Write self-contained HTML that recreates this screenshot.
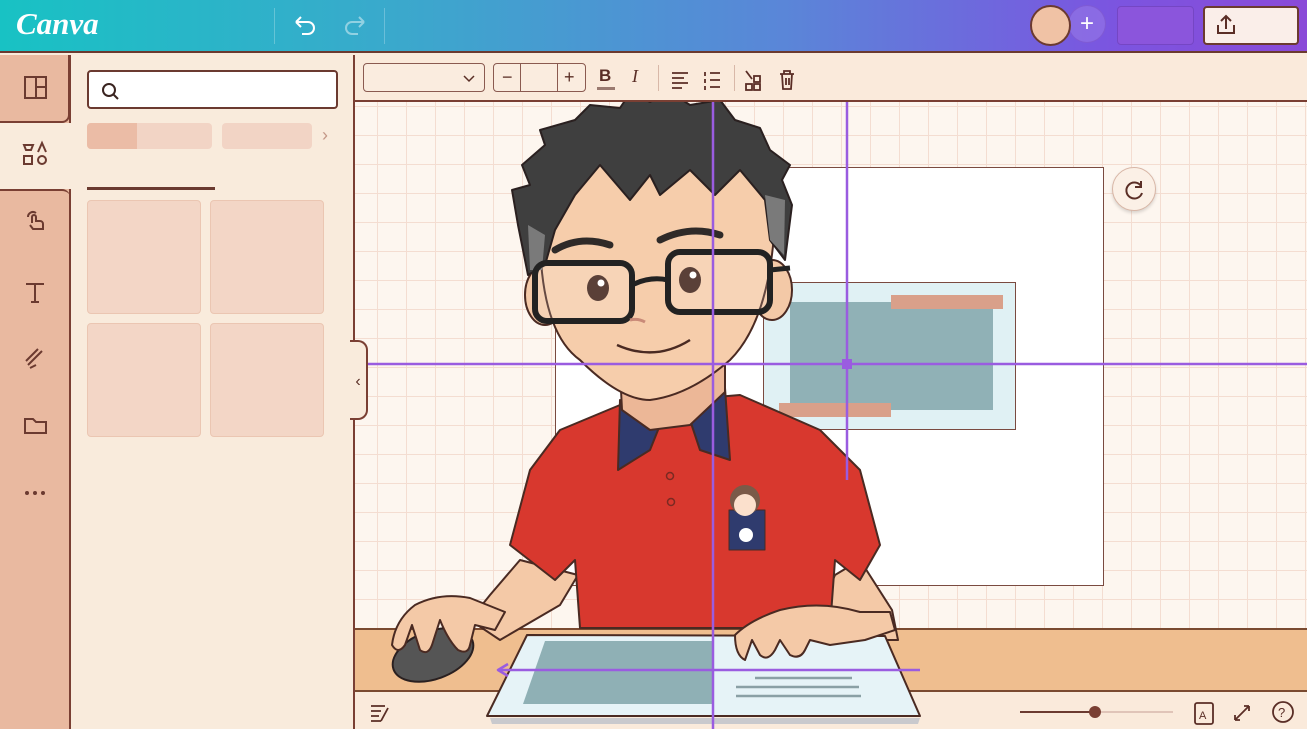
<!DOCTYPE html>
<html><head><meta charset="utf-8"><style>
*{margin:0;padding:0;box-sizing:border-box}
html,body{width:1307px;height:729px;overflow:hidden}
body{font-family:"Liberation Sans",sans-serif;background:#f9ebdc;position:relative}
.top{position:absolute;left:0;top:0;width:1307px;height:53px;background:linear-gradient(90deg,#18c2c4 0%,#3aa9cc 30%,#5a86d8 60%,#7b55e0 85%,#8a4ad8 100%);border-bottom:2px solid #6b3a30}
.logo{position:absolute;left:16px;top:6px;font-family:"Liberation Serif",serif;font-style:italic;font-weight:bold;font-size:31px;color:#fff}
.sep{position:absolute;top:8px;width:1px;height:36px;background:rgba(255,255,255,.25)}
.side{position:absolute;left:0;top:55px;width:71px;height:674px;background:#e9b9a0;border-right:2px solid #7a3f33}
.panel{position:absolute;left:71px;top:55px;width:284px;height:674px;background:#f9ebdc;border-right:2px solid #7a3f33}
.tile{position:absolute;width:114px;height:114px;background:#f3d6c6;border:1.5px solid #ebc6b2;border-radius:4px}
.tb{position:absolute;left:355px;top:55px;width:952px;height:47px;background:#faeadb;border-bottom:2px solid #7a3f33}
.box{position:absolute;border:1.5px solid #8a5a50;border-radius:4px;background:#faecdf}
</style></head><body>
<div class="top">
 <div class="logo">Canva</div>
 <div class="sep" style="left:274px"></div><div class="sep" style="left:384px"></div>
 <svg style="position:absolute;left:290px;top:12px" width="80" height="28"><path d="M6 10h12a6 6 0 0 1 0 12h-6M6 10l5-5M6 10l5 5" stroke="#fff" stroke-width="2" fill="none"/><path d="M74 10H62a6 6 0 0 0 0 12h6M74 10l-5-5M74 10l-5 5" stroke="rgba(255,255,255,.45)" stroke-width="2" fill="none"/></svg>
 <div style="position:absolute;left:1068px;top:5px;width:38px;height:38px;border-radius:50%;background:rgba(150,120,230,.6);border:1px solid rgba(120,80,200,.6);color:#fff;font-size:24px;text-align:center;line-height:36px">+</div>
 <div style="position:absolute;left:1030px;top:5px;width:41px;height:41px;border-radius:50%;background:#f0c2a5;border:2px solid #6b3a30"></div>
 <div style="position:absolute;left:1117px;top:6px;width:77px;height:39px;border-radius:4px;background:#8b55dc;border:1px solid #7546c4"></div>
 <div style="position:absolute;left:1203px;top:6px;width:96px;height:39px;border-radius:4px;background:#faeee9;border:2px solid #6b3a30"><svg width="30" height="30" style="position:absolute;left:8px;top:4px"><path d="M5 13v8h16v-8M13 17V4M8 9l5-5 5 5" stroke="#5a2e26" stroke-width="2" fill="none"/></svg></div>
</div>
<div class="side">
 <div style="position:absolute;left:0;top:0;width:70px;height:68px;background:#e9b9a0;border:2px solid #7a3f33;border-left:none;border-top:none;border-radius:0 0 8px 0"></div>
 <div style="position:absolute;left:0;top:68px;width:73px;height:66px;background:#f9ebdc"></div>
 <div style="position:absolute;left:0;top:134px;width:70px;height:560px;border-top:2px solid #7a3f33;border-radius:0 8px 0 0"></div>
 <svg width="70" height="674" style="position:absolute;left:0;top:0" fill="none" stroke="#6b3a30" stroke-width="2">
  <rect x="25" y="22" width="21" height="21"/><path d="M36 22v21M36 32h10"/>
  <path d="M24 90h9l-2 5h-5zM38 97l4-9 4 9M24 101h8v8h-8z"/><circle cx="42" cy="105" r="4"/>
  <path d="M28 162a5 5 0 0 1 8-4M32 168v-6a2 2 0 0 1 4 0v4h4a3 3 0 0 1 3 3v5h-10l-3-4"/>
  <path d="M26 229h18M35 229v18M31 247h8"/>
  <path d="M26 306l12-12M28 310l14-14M30 313l6-3"/>
  <path d="M25 364h8l3 3h10v11h-21z"/>
  <g fill="#6b3a30" stroke="none"><circle cx="27" cy="438" r="2"/><circle cx="35" cy="438" r="2"/><circle cx="43" cy="438" r="2"/></g>
 </svg>
</div>
<div class="panel">
 <div style="position:absolute;left:16px;top:15px;width:251px;height:39px;background:#fff;border:2px solid #6b3a30;border-radius:4px"><svg width="30" height="30" style="position:absolute;left:8px;top:5px"><circle cx="12" cy="13" r="6" stroke="#3a2420" stroke-width="2" fill="none"/><path d="M16 17l5 5" stroke="#3a2420" stroke-width="2"/></svg></div>
 <div style="position:absolute;left:16px;top:68px;width:125px;height:26px;border-radius:4px;background:#f2d4c5"><div style="width:50px;height:26px;background:#ebbca6;border-radius:4px 0 0 4px"></div></div>
 <div style="position:absolute;left:151px;top:68px;width:90px;height:26px;border-radius:4px;background:#f2d4c5"></div>
 <div style="position:absolute;left:251px;top:70px;color:#c49888;font-size:18px">›</div>
 <div style="position:absolute;left:16px;top:132px;width:128px;height:3px;background:#6b3a30"></div>
 <div class="tile" style="left:16px;top:145px"></div><div class="tile" style="left:139px;top:145px"></div>
 <div class="tile" style="left:16px;top:268px"></div><div class="tile" style="left:139px;top:268px"></div>
</div>
<!-- canvas -->
<div style="position:absolute;left:355px;top:102px;width:952px;height:526px;background-color:#fdf6ef;background-image:linear-gradient(#f4ddd1 1px,transparent 1px),linear-gradient(90deg,#f4ddd1 1px,transparent 1px);background-size:29px 29px;background-position:-7px 4px"></div>
<div style="position:absolute;left:555px;top:167px;width:549px;height:419px;background:#fff;border:1.5px solid #7a4a40"></div>
<div style="position:absolute;left:763px;top:282px;width:253px;height:148px;background:#e0f1f4;border:1.5px solid #7a4a40"></div>
<div style="position:absolute;left:790px;top:302px;width:203px;height:108px;background:#90b1b6"></div>
<div style="position:absolute;left:891px;top:295px;width:112px;height:14px;background:#d9a08a"></div>
<div style="position:absolute;left:779px;top:403px;width:112px;height:14px;background:#d9a08a"></div>
<div style="position:absolute;left:1112px;top:167px;width:44px;height:44px;border-radius:50%;background:#fbf0e6;border:1px solid #d8b6a6;box-shadow:0 2px 3px rgba(0,0,0,.15)"><svg width="44" height="44"><path d="M28 18a8 8 0 1 0 1 7M28 13v6h-6" stroke="#5a2e26" stroke-width="2" fill="none"/></svg></div>
<!-- desk -->
<div style="position:absolute;left:355px;top:628px;width:952px;height:64px;background:#efbe8f;border-top:2px solid #7a4a30;border-bottom:2px solid #7a4a30"></div>
<!-- bottom bar -->
<div style="position:absolute;left:355px;top:694px;width:952px;height:35px;background:#faeadb"></div>
<svg width="952" height="35" style="position:absolute;left:355px;top:694px" stroke="#5a2e26" stroke-width="1.8" fill="none">
 <path d="M16 12h14M16 17h10M16 22h8M16 27h10M33 14l-7 13"/>
 <path d="M665 18h75" stroke="#6b3a30" stroke-width="2"/><path d="M740 18h78" stroke="#e0c4b8" stroke-width="2"/>
 <circle cx="740" cy="18" r="6" fill="#7a3f33" stroke="none"/>
 <rect x="840" y="9" width="18" height="21" rx="2"/><text x="844" y="25" font-size="11" fill="#5a2e26" stroke="none" font-family="Liberation Sans">A</text>
 <path d="M880 26l14-14M880 26v-5M880 26h5M894 12h-5M894 12v5"/>
 <circle cx="928" cy="18" r="10"/><text x="923" y="23" font-size="13" fill="#5a2e26" stroke="none" font-family="Liberation Sans">?</text>
</svg>
<!-- character -->
<svg width="1307" height="729" style="position:absolute;left:0;top:0" stroke-linejoin="round">
 <!-- arms -->
 <path d="M520 560 L490 595 L470 620 L500 640 L560 605 L578 575Z" fill="#f4c9a7" stroke="#4a2a22" stroke-width="2"/>
 <path d="M860 560 L892 610 L898 640 L850 640 L820 610 L835 575Z" fill="#f4c9a7" stroke="#4a2a22" stroke-width="2"/>
 <!-- shirt -->
 <path d="M620 405 L560 430 L530 470 L510 545 L555 580 L575 560 L580 628 L830 628 L835 560 L860 580 L880 545 L860 470 L820 430 L740 395 Z" fill="#d8382e" stroke="#4a2a22" stroke-width="2"/>
 <path d="M620 400 L618 470 L650 450 L662 420Z M725 388 L730 460 L700 450 L690 420Z" fill="#2f3b6e" stroke="#4a2a22" stroke-width="2"/>
 <circle cx="670" cy="476" r="3.5" fill="none" stroke="#7a2a22" stroke-width="1.5"/><circle cx="671" cy="502" r="3.5" fill="none" stroke="#7a2a22" stroke-width="1.5"/>
 <rect x="729" y="510" width="36" height="40" fill="#2f3b6e" stroke="#4a2a22"/>
 <circle cx="745" cy="500" r="15" fill="#7a5a48"/><circle cx="745" cy="505" r="11" fill="#fbe0cc"/>
 <circle cx="746" cy="535" r="7" fill="#fff"/>
 <!-- neck -->
 <path d="M620 370 L622 410 L650 430 L690 425 L725 392 L725 360Z" fill="#ecb797" stroke="#4a2a22" stroke-width="2"/>
 <!-- ears -->
 <ellipse cx="545" cy="295" rx="20" ry="30" fill="#f4c9a7" stroke="#4a2a22" stroke-width="2"/>
 <ellipse cx="772" cy="290" rx="20" ry="30" fill="#f4c9a7" stroke="#4a2a22" stroke-width="2"/>
 <!-- face -->
 <path d="M540 220 Q538 330 580 360 Q620 400 650 400 Q690 395 730 360 Q770 320 775 220 Q770 150 660 150 Q545 150 540 220Z" fill="#f6cdab" stroke="#4a2a22" stroke-width="2"/>
 <!-- hair -->
 <path d="M528 275 L518 225 L512 190 L530 185 L522 165 L545 145 L540 130 L575 120 L590 105 L620 108 L630 93 L650 102 L670 92 L690 105 L720 100 L735 120 L760 128 L770 150 L790 165 L782 180 L792 205 L785 260 L770 240 L765 200 L740 170 L715 195 L690 170 L660 195 L650 175 L630 200 L600 165 L575 195 L555 230 L545 265Z" fill="#3f3f3f" stroke="#2a2020" stroke-width="2"/>
 <path d="M765 195 L785 200 L784 255 L770 240Z" fill="#7a7a7a"/>
 <path d="M528 225 L545 235 L542 270 L530 270Z" fill="#7a7a7a"/>
 <!-- brows -->
 <path d="M555 250 Q580 235 610 245" stroke="#2f2a28" stroke-width="7" fill="none" stroke-linecap="round"/>
 <path d="M660 240 Q690 225 720 235" stroke="#2f2a28" stroke-width="7" fill="none" stroke-linecap="round"/>
 <!-- glasses -->
 <rect x="535" y="263" width="97" height="58" rx="12" fill="rgba(255,255,255,.15)" stroke="#222" stroke-width="6"/>
 <rect x="668" y="252" width="102" height="60" rx="12" fill="rgba(255,255,255,.15)" stroke="#222" stroke-width="6"/>
 <path d="M632 285 Q650 276 668 280M770 270 L790 268" stroke="#222" stroke-width="5" fill="none"/>
 <ellipse cx="598" cy="288" rx="11" ry="13" fill="#5a4038"/><ellipse cx="690" cy="280" rx="11" ry="13" fill="#5a4038"/>
 <circle cx="601" cy="283" r="3.5" fill="#fff"/><circle cx="693" cy="275" r="3.5" fill="#fff"/>
 <path d="M630 320 Q638 318 645 322" stroke="#c98a78" stroke-width="3" fill="none"/>
 <path d="M617 345 Q655 362 690 340" stroke="#4a2a22" stroke-width="2.5" fill="none"/>
 <!-- tablet -->
 <path d="M527 635 L885 636 L920 716 L487 716Z" fill="#e6f3f7" stroke="#4a2a22" stroke-width="2"/>
 <path d="M490 718 L920 718 L918 724 L492 724Z" fill="#c9c9cd"/>
 <path d="M545 641 L712 641 L712 704 L523 704Z" fill="#8fb0b5"/>
 <path d="M755 678h97M736 687h123M736 696h125" stroke="#8aa0a5" stroke-width="2.5"/>
 <!-- mouse & hands -->
 <ellipse cx="433" cy="655" rx="42" ry="24" fill="#555" stroke="#2a2020" stroke-width="2" transform="rotate(-20 433 655)"/>
 <path d="M470 598 Q440 592 415 605 Q395 620 392 645 Q398 655 405 645 L412 625 L420 650 Q428 656 432 645 L440 620 Q448 640 458 650 Q468 655 470 645 L475 625 L495 630 L505 612Z" fill="#f4c9a7" stroke="#4a2a22" stroke-width="2"/>
 <path d="M860 612 Q820 600 780 610 Q750 620 735 635 Q735 655 745 660 L752 640 L760 655 Q768 662 775 650 L780 640 L790 655 Q800 660 805 650 L810 640 L830 645 L865 640 L895 630 L890 612Z" fill="#f4c9a7" stroke="#4a2a22" stroke-width="2"/>
 <!-- guides -->
 <g stroke="#9a5ce0" stroke-width="2.5" fill="none">
  <path d="M713 100V729M847 100V480M368 364H1307M500 670H920"/><path d="M508 664L498 670L508 676"/>
 </g>
 <rect x="842" y="359" width="10" height="10" fill="#9a5ce0"/>
</svg>
<!-- collapse tab -->
<div style="position:absolute;left:350px;top:340px;width:18px;height:80px;background:#f9ebdc;border:2px solid #7a3f33;border-left:none;border-radius:0 10px 10px 0;color:#5a2e26;font-size:16px;line-height:80px;text-align:center">‹</div>
<!-- toolbar -->
<div class="tb">
 <div class="box" style="left:8px;top:8px;width:122px;height:29px"><svg width="14" height="10" style="position:absolute;right:8px;top:10px"><path d="M2 2l5 5 5-5" stroke="#5a2e26" stroke-width="1.5" fill="none"/></svg></div>
 <div class="box" style="left:138px;top:8px;width:93px;height:29px"><div style="position:absolute;left:26px;top:0;width:1px;height:27px;background:#8a5a50"></div><div style="position:absolute;left:63px;top:0;width:1px;height:27px;background:#8a5a50"></div><span style="position:absolute;left:8px;top:3px;font-size:18px;color:#5a2e26">−</span><span style="position:absolute;left:70px;top:3px;font-size:18px;color:#5a2e26">+</span></div>
 <span style="position:absolute;left:244px;top:11px;font-weight:bold;font-size:17px;color:#5a2e26">B</span><div style="position:absolute;left:242px;top:32px;width:18px;height:3px;background:#9a7a70"></div>
 <span style="position:absolute;left:277px;top:11px;font-style:italic;font-size:18px;color:#5a2e26;font-family:'Liberation Serif',serif">I</span>
 <div style="position:absolute;left:303px;top:10px;width:1px;height:26px;background:#d8b8a8"></div>
 <div style="position:absolute;left:379px;top:10px;width:1px;height:26px;background:#d8b8a8"></div>
 <svg width="140" height="40" style="position:absolute;left:310px;top:4px" stroke="#5a2e26" stroke-width="1.8" fill="none"><path d="M7 14h16M7 19h12M7 24h16M7 29h10"/><path d="M45 14h10M45 21h10M45 28h10M40 13v4M40 20v4M40 27v4"/><rect x="89" y="17" width="6" height="6"/><rect x="89" y="25" width="6" height="6"/><rect x="81" y="25" width="6" height="6"/><path d="M81 12l6 8"/><path d="M115 15h14M119 15v-3h6v3M117 15l1 15h8l1-15M121 19v7M124 19v7"/></svg>
</div>
</body></html>
